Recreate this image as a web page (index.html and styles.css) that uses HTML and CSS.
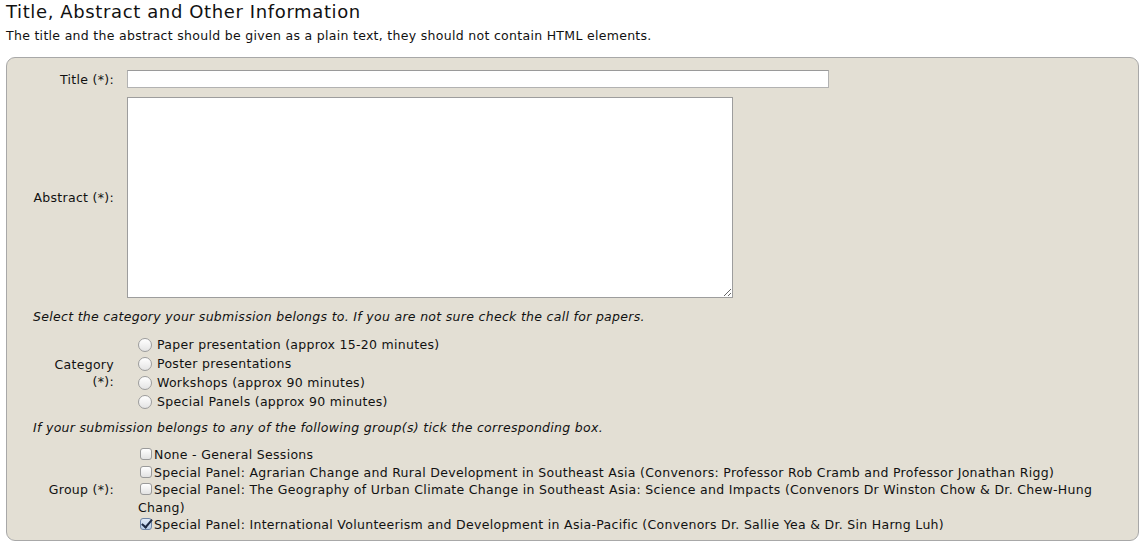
FILE: index.html
```html
<!DOCTYPE html>
<html lang="en">
<head>
  <meta charset="UTF-8" />
  <meta name="viewport" content="width=device-width, initial-scale=1.0"/>
  <title>Title, Abstract and Other Information</title>
  <link rel="stylesheet" href="styles.css">
</head>
<body>
  <h1 class="page-title">Title, Abstract and Other Information</h1>
  <p class="intro">The title and the abstract should be given as a plain text, they should not contain HTML elements.</p>

  <form class="panel">
    <div class="row row-title">
      <label class="label" for="title">Title (*):</label>
      <div class="field"><input class="text-input" id="title" type="text"></div>
    </div>

    <div class="row row-abstract">
      <label class="label" for="abstract">Abstract (*):</label>
      <div class="field"><textarea class="abstract" id="abstract"></textarea></div>
    </div>

    <p class="note">Select the category your submission belongs to. If you are not sure check the call for papers.</p>

    <div class="row row-category">
      <div class="label">Category (*):</div>
      <div class="options radios">
        <label class="option"><input type="radio" name="category"><span>Paper presentation (approx 15-20 minutes)</span></label>
        <label class="option"><input type="radio" name="category"><span>Poster presentations</span></label>
        <label class="option"><input type="radio" name="category"><span>Workshops (approx 90 minutes)</span></label>
        <label class="option"><input type="radio" name="category"><span>Special Panels (approx 90 minutes)</span></label>
      </div>
    </div>

    <p class="note note-group">If your submission belongs to any of the following group(s) tick the corresponding box.</p>

    <div class="row row-group">
      <div class="label">Group (*):</div>
      <div class="options checks">
        <label class="check"><input type="checkbox">None - General Sessions</label>
        <label class="check"><input type="checkbox">Special Panel: Agrarian Change and Rural Development in Southeast Asia (Convenors: Professor Rob Cramb and Professor Jonathan Rigg)</label>
        <label class="check"><input type="checkbox">Special Panel: The Geography of Urban Climate Change in Southeast Asia: Science and Impacts (Convenors Dr Winston Chow &amp; Dr. Chew-Hung Chang)</label>
        <label class="check"><input type="checkbox" checked>Special Panel: International Volunteerism and Development in Asia-Pacific (Convenors Dr. Sallie Yea &amp; Dr. Sin Harng Luh)</label>
      </div>
    </div>
  </form>
</body>
</html>
```

FILE: styles.css
```css
body {
  margin: 0;
  padding: 0 2px 0 6px;
  font-family: 'DejaVu Sans', Verdana, sans-serif;
  font-size: 12.5px;
  letter-spacing: 0.3px;
  color: #111;
  background: #fff;
}

.page-title {
  margin: 0;
  padding-top: 1px;
  font-size: 18px;
  font-weight: normal;
  line-height: 22px;
  letter-spacing: 0.62px;
}

.intro {
  margin: 5px 0 0;
  line-height: 16px;
}

.panel {
  margin-top: 13px;
  background: #e3dfd4;
  border: 1px solid #a8a8a8;
  border-radius: 9px;
  padding: 12px 22px 6px;
}

.row {
  display: grid;
  grid-template-columns: 85px 1fr;
  column-gap: 13px;
  align-items: center;
}

.label {
  text-align: right;
  line-height: 17px;
}

.field {
  display: flex;
}

.text-input {
  width: 702px;
  height: 18px;
  box-sizing: border-box;
  margin: 0;
  border: 1px solid #b2b2b2;
  border-top-color: #9a9a9a;
  background: #fff;
  font: inherit;
}

.row-abstract {
  margin-top: 9px;
}

.abstract {
  width: 606px;
  height: 201px;
  box-sizing: border-box;
  margin: 0;
  border: 1px solid #9d9d9d;
  background: #fff;
  font: inherit;
}

.note {
  margin: 11px 0 0 4px;
  font-style: italic;
  line-height: 16px;
}

.options {
  display: flex;
  flex-direction: column;
  padding-left: 11px;
}

.row-category {
  margin-top: 10px;
}

.option {
  display: flex;
  align-items: center;
  gap: 5px;
  height: 19px;
}

.option input {
  appearance: none;
  flex: none;
  width: 14px;
  height: 14px;
  margin: 0;
  border: 1px solid #9c9c9c;
  border-radius: 50%;
  background: linear-gradient(#ffffff, #e4e4e4);
  box-sizing: border-box;
}

.note-group {
  margin-top: 9px;
}

.row-group {
  margin-top: 10px;
}

.checks {
  display: block;
}

.check {
  display: block;
  line-height: 17.5px;
}

.check input {
  appearance: none;
  position: relative;
  width: 12px;
  height: 12px;
  margin: 0 2px 0 2px;
  vertical-align: -1px;
  border: 1px solid #9a9a9a;
  border-radius: 3px;
  background: linear-gradient(#ffffff, #e2e2e2);
  box-sizing: border-box;
}

.check input:checked {
  border-color: #6f86a8;
  background: linear-gradient(#dfeaf8, #b7cde9);
}

.check input:checked::after {
  content: "";
  position: absolute;
  left: 3px;
  top: -2px;
  width: 4px;
  height: 9px;
  border: solid #1d2a44;
  border-width: 0 2px 2px 0;
  transform: rotate(40deg);
}
```
